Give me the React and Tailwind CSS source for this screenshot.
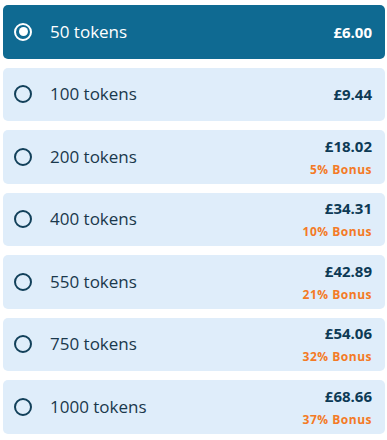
import React from "react";

const items = [
  { t: "50 tokens", p: "£6.00" },
  { t: "100 tokens", p: "£9.44" },
  { t: "200 tokens", p: "£18.02", b: "5% Bonus" },
  { t: "400 tokens", p: "£34.31", b: "10% Bonus" },
  { t: "550 tokens", p: "£42.89", b: "21% Bonus" },
  { t: "750 tokens", p: "£54.06", b: "32% Bonus" },
  { t: "1000 tokens", p: "£68.66", b: "37% Bonus" },
];

export default function App() {
  return (
    <div
      className="w-[387px] h-[440px] bg-white pt-[5px] pl-[3px] flex flex-col gap-[9px]"
      style={{ fontFamily: '"Open Sans", "Noto Sans", sans-serif' }}
    >
      {items.map((it, i) => {
        const sel = i === 0;
        return (
          <div
            key={i}
            className={
              "w-[382px] h-[53.5px] rounded-[5px] flex items-center pl-[11px] pr-[13px] " +
              (sel ? "bg-[#0f6a92]" : "bg-[#dfedfa]")
            }
          >
            <div
              className={
                "w-[18px] h-[18px] rounded-full border-[2.5px] flex items-center justify-center shrink-0 " +
                (sel ? "border-white" : "border-[#12405a]")
              }
            >
              {sel && <div className="w-[9px] h-[9px] rounded-full bg-white" />}
            </div>
            <div
              className={
                "ml-[18px] text-[17px] leading-[24px] flex-1 " +
                (sel ? "text-white" : "text-[#1a384c]")
              }
            >
              {it.t}
            </div>
            <div className="flex flex-col items-end">
              <div
                className={
                  "text-[15px] leading-[20px] font-bold " +
                  (sel ? "text-white" : "text-[#0d3a55]")
                }
              >
                {it.p}
              </div>
              {it.b && (
                <div className="mt-[6px] text-[12px] leading-[16px] font-bold tracking-[0.5px] text-[#f47a25]">
                  {it.b}
                </div>
              )}
            </div>
          </div>
        );
      })}
    </div>
  );
}
